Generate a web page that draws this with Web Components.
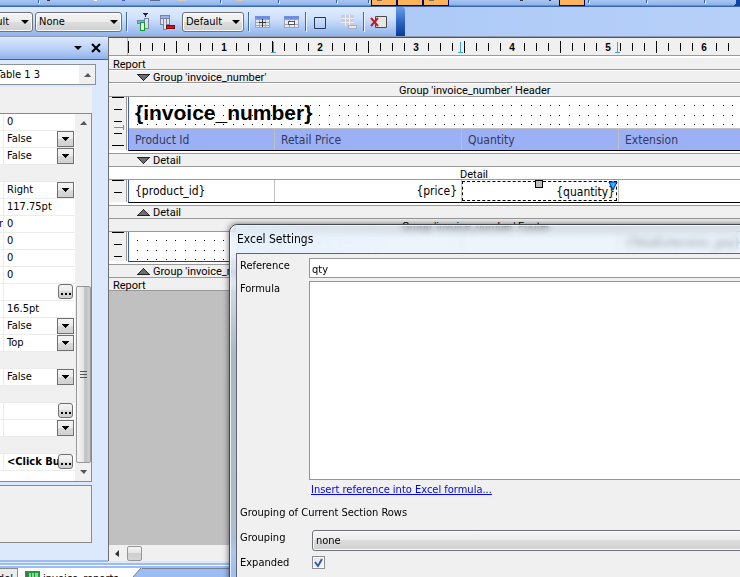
<!DOCTYPE html>
<html lang="en">
<head>
<meta charset="utf-8">
<title>Report Designer</title>
<style>
html, body { height: 100%; }
body { margin: 0; overflow: hidden; font: 11px/13px "DejaVu Sans Condensed", "DejaVu Sans", sans-serif; color: #000; }
</style>
</head>
<body>
<report-app></report-app>

<template id="t-app">
<style>
:host { display: flex; flex-direction: column; height: 100%; background: #dce9fd; }
.work { display: flex; flex: 1; min-height: 0; border-top: 1px solid #8e9aad; }
property-panel { flex: none; width: 108px; }
report-canvas { flex: 1; min-width: 0; }
excel-dialog { position: absolute; left: 229px; top: 224px; right: -8px; bottom: -8px; }
</style>
<top-strip></top-strip>
<main-toolbar></main-toolbar>
<div class="work">
  <property-panel></property-panel>
  <report-canvas></report-canvas>
</div>
<doc-tabs></doc-tabs>
<excel-dialog heading="Excel Settings"></excel-dialog>
</template>

<template id="t-strip">
<style>
:host { display: block; height: 7px; flex: none; background: linear-gradient(#a9c6f2, #8fb3ea 5px, #3b66b0 6px); overflow: hidden; }
svg { display: block; }
</style>
<svg width="740" height="7" shape-rendering="crispEdges" aria-hidden="true">
  <g fill="#3663ad"><path d="M38 0h1v3h-1zM220 0h1v3h-1zM278 0h1v3h-1zM336 0h1v3h-1zM368 0h1v3h-1zM588 0h1v3h-1zM646 0h1v3h-1zM704 0h1v3h-1z"/></g>
  <g fill="#e6f0ff"><path d="M39 1h1v3h-1zM221 1h1v3h-1zM279 1h1v3h-1zM337 1h1v3h-1zM369 1h1v3h-1zM589 1h1v3h-1zM647 1h1v3h-1zM705 1h1v3h-1z"/></g>
  <path d="M47 0h3v1h-3zM520 0h3v1h-3zM549 0h2v1h-2z" fill="#34343c"/>
  <path d="M150 0h10v1h-10z" fill="#5a6b90"/><path d="M177 0h9v1h-9zM236 0h7v1h-7z" fill="#d8ccb8"/>
  <path d="M94 0h3v1h-3z" fill="#fff"/><path d="M122 0h3v1h-3z" fill="#4a55d0"/>
  <path d="M371 0h78v6h-78zM559 0h26v6h-26z" fill="#00007c"/>
  <path d="M372 0h24v5h-24zM398 0h24v5h-24zM424 0h24v5h-24zM560 0h24v5h-24z" fill="#ffb459"/>
  <path d="M377 0h5v1h-5zM429 0h5v1h-5z" fill="#70706c"/>
  <path d="M736 0h4v6h-6l2-3z" fill="#0f46a3"/>
</svg>
</template>

<template id="t-toolbar">
<style>
:host { display: flex; flex: none; height: 29px; background: linear-gradient(90deg, #a4c2f4, #b6d0f9); }
.bar { display: flex; align-items: center; width: 396px; height: 29px; background: linear-gradient(#dfecff, #cfe1fb 40%, #8fb3ec); }
.cap { width: 9px; border-radius: 0 3px 0 0; background: linear-gradient(#6b9dec, #2f66c4 50%, #0a3a94); }
.cut { display: flex; justify-content: flex-end; width: 33px; overflow: hidden; }
.cut combo-box { flex: none; width: 64px; }
.none { width: 87px; margin: 0 4px 0 2px; }
.def { width: 62px; margin: 0 4px 0 5px; }
i { flex: none; width: 1px; height: 19px; background: #3a68b4; box-shadow: 1px 1px 0 #eef5ff; }
button { flex: none; display: block; border: 0; padding: 0; background: none; height: 20px; }
svg { display: block; margin: auto; }
.a { width: 26px; margin-left: 4px; } .b { width: 20px; } .c { width: 28px; } .d { width: 26px; margin-left: 2px } .e { width: 28px; } .f { width: 29px; } .g { width: 30px; }
</style>
<div class="bar">
  <div class="cut"><combo-box label="Style" value="Default"></combo-box></div>
  <combo-box class="none" label="Format" value="None"></combo-box>
  <i></i>
  <button class="a" aria-label="Insert column"><svg width="18" height="18" shape-rendering="crispEdges"><path d="M8 0h5v1h-5zM9 1h3v1h-3zM10 2h1v2h-1z" fill="#222"/><path d="M9 5h4v10h-4z" fill="#d8dde8" stroke="#7b8499"/><path d="M2 7h7v3h-7z" fill="#8fa9ee" stroke="#6a7fc4"/><path d="M5 9h4v8h-4z" fill="#eaf7ea" stroke="#149a28"/></svg></button>
  <button class="b" aria-label="Delete column"><svg width="18" height="18" shape-rendering="crispEdges"><path d="M2 2h9v3h-9z" fill="#9ab1f0" stroke="#6d83c2"/><path d="M2 5h3v6h-3zM5 5h3v11h-3zM8 5h3v6h-3z" fill="#dfe4ee" stroke="#7b8499"/><path d="M8 12h8v3h-8z" fill="#d61212" stroke="#7e0808"/></svg></button>
  <combo-box class="def" label="Layout" value="Default"></combo-box>
  <i></i>
  <button class="c" aria-label="Merge cells"><svg width="16" height="14" shape-rendering="crispEdges"><path d="M0 1h15v12h-15z" fill="#e6eaf2"/><path d="M0 1h15v3h-15z" fill="#6f8fde"/><path d="M0 4h15v1h-15zM0 7h15v1h-15zM0 10h15v1h-15zM0 12h15v1h-15zM0 4h1v9h-1zM4 4h1v9h-1zM10 4h1v9h-1zM14 4h1v9h-1z" fill="#9ea6b6"/><path d="M7 4h1v8h-1zM4 7h7v1h-7z" fill="#333"/></svg></button>
  <button class="d" aria-label="Split cells"><svg width="16" height="14" shape-rendering="crispEdges"><path d="M0 1h15v12h-15z" fill="#e6eaf2"/><path d="M0 1h15v3h-15z" fill="#6f8fde"/><path d="M0 4h15v1h-15zM0 9h15v1h-15zM0 12h15v1h-15zM0 4h1v9h-1zM14 4h1v9h-1zM5 4h1v2h-1zM10 4h1v2h-1zM5 10h1v2h-1zM10 10h1v2h-1z" fill="#9ea6b6"/><path d="M4 6h7v4h-7z" fill="#555"/><path d="M5 7h5v2h-5z" fill="#fff"/></svg></button>
  <i></i>
  <button class="e" aria-label="Border"><svg width="14" height="14"><path d="M1.500 2.500h11v11h-11z" fill="none" stroke="#26365a" stroke-width="1"/></svg></button>
  <button class="f" aria-label="Remove row"><svg width="18" height="16" shape-rendering="crispEdges"><path d="M1 1h13v11h-13z" fill="#c9ced8"/><path d="M1 4h13v1h-13zM1 8h13v1h-13zM5 1h1v11h-1zM9 1h1v11h-1z" fill="#eceef1"/><path d="M8 11h8v3h-8z" fill="#e9ebee" stroke="#a8aeb8"/></svg></button>
  <i></i>
  <button class="g" aria-label="Clear"><svg width="18" height="16"><path d="M5.500 2.500h11v11h-11z" fill="#e6e6e2" stroke="#4a4a4a"/><path d="M1 4l7 8M8 4l-7 8" stroke="#c0202a" stroke-width="2" fill="none"/></svg></button>
</div>
<div class="cap"></div>
</template>

<template id="t-combo">
<style>
:host { display: grid; height: 20px; }
select { grid-area: 1/1; appearance: none; width: 100%; height: 100%; margin: 0; padding: 0 18px 0 3px; font: inherit; color: #000; border: 1px solid #6f7277; border-radius: 3px; background: linear-gradient(#f4f4f4, #ebebeb 50%, #dddddd 50%, #cfcfcf); box-shadow: inset 0 0 0 1px #fbfbfb; }
svg { grid-area: 1/1; place-self: center end; margin-right: 4px; pointer-events: none; }
</style>
<select><option></option></select>
<svg width="8" height="4" aria-hidden="true"><path d="M0 0h8l-4 4z"/></svg>
</template>

<template id="t-panel">
<style>
:host { display: flex; flex-direction: column; background: #dce9fd; padding-bottom: 17px; overflow: hidden; border-bottom: 2px solid #9cbdf2; box-sizing: border-box; }
header { display: flex; align-items: center; justify-content: flex-end; flex: none; height: 22px; gap: 9px; padding-right: 6px; background: linear-gradient(#dbe8fd, #bcd3f7 50%, #8fb2ec); border-bottom: 1px solid #3a66b2; }
header button { display: block; border: 0; background: none; padding: 0; }
header svg { display: block; }
.pick { display: flex; flex: none; width: 95px; height: 19px; margin: 4px 0 2px; border: 1px solid #8c9097; border-left: 0; background: #fff; }
.pick span { width: 40px; line-height: 20px; white-space: nowrap; display: flex; justify-content: flex-end; overflow: hidden; }
.pick button { margin-left: auto; width: 16px; border: 0; padding: 0; background: #f0f0f0; }
.pick svg { display: block; margin: auto; }
.sort { flex: none; width: 92px; height: 26px; background: #f0f0f0; }
.grid { display: flex; flex: none; width: 91px; height: 367px; border: 1px solid #8a8a8a; border-left: 0; background: #fff; margin-bottom: 3px; overflow: hidden; }
.rows { flex: 1; min-width: 0; }
.scroll { display: flex; flex-direction: column; align-items: center; width: 16px; background: #f0f0f0; }
.up { height: 18px; display: flex; align-items: center; }
.track { flex: 1; }
.thumb { box-sizing: border-box; width: 15px; height: 177px; border: 1px solid #979797; border-radius: 2px; background: linear-gradient(90deg, #f6f6f6, #e4e4e4 50%, #bfbfc2 60%, #d0d0d3); display: grid; place-items: center; }
.desc { flex: 1; width: 91px; border: 1px solid #8a8a8a; border-left: 0; background: #f0f0f0; }
</style>
<header>
  <button aria-label="Menu"><svg width="8" height="4"><path d="M0 0h8l-4 4z"/></svg></button>
  <button aria-label="Close"><svg width="11" height="10"><path d="M1 1l8 8M9 1l-8 8" stroke="#000" stroke-width="2" fill="none"/></svg></button>
</header>
<div class="pick"><span>Table 1 3</span><button aria-label="Previous"><svg width="7" height="4"><path d="M0 4h7l-3-4z" fill="#555"/></svg></button></div>
<div class="sort"></div>
<div class="grid">
  <div class="rows"></div>
  <div class="scroll">
    <div class="up"><svg width="7" height="4"><path d="M0 4h7l-3-4z" fill="#555"/></svg></div>
    <div class="track"></div>
    <div class="thumb"><svg width="7" height="8" shape-rendering="crispEdges"><path d="M0 0h7v1h-7zM0 3h7v1h-7zM0 6h7v1h-7z" fill="#555"/></svg></div>
    <div class="up"><svg width="7" height="4"><path d="M0 0h7l-3 4z" fill="#555"/></svg></div>
  </div>
</div>
<div class="desc"></div>
</template>

<template id="t-row">
<style>
:host { display: flex; box-sizing: border-box; height: 17px; border-bottom: 1px solid #ececec; background: #fff; }
:host([category]) { background: #f0f0f0; }
:host([category]) .key { border-color: #f0f0f0; }
.key { flex: none; width: 3px; border-right: 1px solid #ececec; color: #00007c; line-height: 16px; overflow: hidden; display: flex; justify-content: flex-end; }
.val { flex: 1; min-width: 0; padding-left: 3px; line-height: 16px; white-space: nowrap; overflow: hidden; }
:host([strong]) .val { font-weight: bold; }
button { display: grid; place-items: center; flex: none; width: 17px; height: 16px; margin-right: 1px; padding: 0; border: 1px solid #707070; background: linear-gradient(#f4f4f4, #ebebeb 50%, #dadada 50%, #d0d0d0); color: #000; }
button.more { width: 15px; height: 15px; margin-right: 2px; border-radius: 3px; }
</style>
<span class="key"></span><span class="val"><slot></slot></span>
</template>

<template id="t-canvas">
<style>
:host { display: flex; flex-direction: column; border-top: 1px solid #555; border-left: 1px solid #6d6d6d; background: #fff; box-sizing: border-box; margin-bottom: 1px; }
page-ruler { margin-bottom: 2px; }
.g1 { margin-bottom: 1px; }
.void { flex: 1; background: #c0c0c0; }
.hs { display: flex; align-items: center; gap: 8px; height: 16px; padding-left: 6px; background: #f0f0f0; }
.hs b { box-sizing: border-box; width: 15px; height: 15px; border: 1px solid #979797; border-radius: 2px; background: linear-gradient(#f5f5f5, #e3e3e3 50%, #cfcfcf 50%, #d4d4d6); }
table { width: 100%; table-layout: fixed; border-collapse: separate; border-spacing: 0; font-size: 12px; }
th, td { box-sizing: border-box; height: 22px; padding: 0 6px; font-weight: normal; text-align: left; line-height: 14px; border-right: 1px solid #c0c0c0; white-space: nowrap; }
th { background: #9cb0f5; color: #333a55; border-top: 1px solid #c0c0c0; }
tr > :last-child { border-right: 0; }
.num { text-align: right; padding-right: 4px; }
.c1 { width: 146px; } .c2 { width: 187px; } .c3 { width: 157px; }
h1 { margin: 0; padding-left: 6px; font: bold 21px/31px "Liberation Sans", Arial, sans-serif; }
.sel { position: relative; padding: 0 1px 0 0; }
.box { display: block; margin: 1px 0 1px; height: 20px; box-sizing: border-box; line-height: 20px; border: 1px dashed #000; text-align: right; padding-right: 1px; }
.sel svg { position: absolute; }
.h { left: 73px; top: 0; } .t { right: 0; top: 1px; }
</style>
<page-ruler></page-ruler>
<report-band class="g1">Report</report-band>
<report-band class="g1" arrow="down">Group 'invoice_number'</report-band>
<report-band indent="290">Group 'invoice_number' Header</report-band>
<report-section dots size="54">
  <h1>{invoice_number}</h1>
  <table><colgroup><col class="c1"><col class="c2"><col class="c3"><col></colgroup>
    <tr><th>Product Id</th><th>Retail Price</th><th>Quantity</th><th>Extension</th></tr></table>
</report-section>
<report-band arrow="down" lined>Detail</report-band>
<report-band indent="351" plain>Detail</report-band>
<report-section size="23">
  <table><colgroup><col class="c1"><col class="c2"><col class="c3"><col></colgroup>
    <tr><td>{product_id}</td><td class="num">{price}</td>
    <td class="sel"><span class="box">{quantity}</span>
      <svg class="h" width="8" height="8" shape-rendering="crispEdges"><path d="M0 0h8v8h-8z"/><path d="M1 1h6v6h-6z" fill="#bdbdbd"/></svg>
      <svg class="t" width="10" height="10"><path d="M1 1h8l-4 8z" fill="#22bdf5" stroke="#0010d8"/></svg></td>
    <td></td></tr></table>
</report-section>
<report-band arrow="up" lined>Detail</report-band>
<report-band indent="293" tall>Group 'invoice_number' Footer</report-band>
<report-section dots blue size="30">
  <table><colgroup><col class="c1"><col class="c2"><col class="c3"><col></colgroup>
    <tr><td></td><td></td><td></td><td>{TotalExtension_grp}</td></tr></table>
</report-section>
<report-band arrow="up" lined>Group 'invoice_number'</report-band>
<report-band tall>Report</report-band>
<div class="void"></div>
<div class="hs"><svg width="4" height="7"><path d="M4 0v7l-4-3z" fill="#333"/></svg><b></b></div>
</template>

<template id="t-ruler">
<style>
:host { display: flex; height: 17px; border-bottom: 1px solid #999; background: #f0f0f0; overflow: hidden; }
span { flex: none; width: 18px; border-right: 1px solid #b8b8b8; }
svg { flex: 1; display: block; height: 17px; }
text { font: bold 10px "Liberation Sans", Arial, sans-serif; text-anchor: middle; }
</style>
<span></span>
</template>

<template id="t-band">
<style>
:host { display: flex; align-items: center; box-sizing: border-box; flex: none; height: 12px; background: #f0f0f0; border-bottom: 1px solid #999; font: 11px/12px Roboto, "Liberation Sans", sans-serif; white-space: nowrap; padding: 2px 0 0 4px; }
:host([indent]), :host([tall]) { height: 13px; }
:host([plain]) { background: #fff; padding-top: 3px; }
:host([tall]) { padding-top: 3px; }
:host([lined]) { height: 16px; background: linear-gradient(#fff 2px, #999 2px 3px, #f0f0f0 3px); padding-top: 4px; }
:host([arrow]) { padding-left: 28px; }
svg { display: block; margin-right: 3px; }
</style>
<slot></slot>
</template>

<template id="t-section">
<style>
:host { display: flex; flex: none; box-sizing: border-box; background: #fff; }
.v { flex: none; width: 18px; background: #f0f0f0; box-sizing: border-box; border-right: 1px solid #999; margin-right: 1px; margin-bottom: 1px; }
.v svg { display: block; }
.page { flex: 1; min-width: 0; display: grid; border-left: 1px solid #3c5fc0; border-bottom: 1px solid #000; overflow: hidden; }
:host([blue]) .page { border-bottom-color: #2338a8; }
.page > * { grid-area: 1/1; min-width: 0; }
.dots { display: block; width: 100%; height: 100%; }
</style>
<div class="v"></div>
<div class="page"><div><slot></slot></div></div>
</template>

<template id="t-tabs">
<style>
:host { display: flex; flex: none; height: 9px; overflow: hidden; background: #9dbcf2; border-top: 2px solid #9dbcf2; box-shadow: inset 0 1px 0 #fff; padding-top: 3px; margin-top: 1px; }
a { display: flex; box-sizing: border-box; height: 19px; color: #000; text-decoration: none; white-space: nowrap; line-height: 19px; }
.off { width: 18px; justify-content: flex-end; padding-right: 4px; background: #ececec; border: 1px solid #8a8a8a; border-left: 0; overflow: hidden; }
.on { padding: 0 14px 0 7px; background: #fff; border-top: 1px solid #fff; gap: 3px; }
.end { display: block; }
.rest { flex: 1; border-top: 1px solid #75809a; height: 19px; }
</style>
<a class="off" href="#model">Model</a>
<a class="on" href="#invoice"><svg width="15" height="16" shape-rendering="crispEdges"><path d="M0 2h15v14h-15z" fill="#1e9c36"/><path d="M4 4h9v10h-9z" fill="#8fd69a"/><path d="M6 4h1v9h-1zM9 4h1v9h-1zM4 8h9v1h-9z" fill="#1e9c36"/><path d="M1 3h2v12h-2z" fill="#5b6a5e"/></svg><span>invoice_reports</span></a>
<svg class="end" width="9" height="9"><path d="M0 0h8l-8 9z" fill="#fff"/><path d="M0 9l8-9" stroke="#75809a" fill="none"/></svg>
<div class="rest"></div>
</template>

<template id="t-dialog">
<style>
:host { display: flex; flex-direction: column; box-sizing: border-box; border: 1px solid #44494f; border-radius: 8px 0 0 0; padding-left: 6px; background: linear-gradient(rgba(190,203,216,.5), rgba(226,239,252,.6) 14px, rgba(226,239,252,.66) 28px, rgba(214,226,240,.8) 60px, rgba(165,180,196,.8) 130px, rgba(172,186,202,.8) 290px, rgba(160,192,240,.9) 340px); backdrop-filter: blur(3px); box-shadow: inset 1px 1px 0 rgba(255,255,255,.75), 0 0 6px rgba(0,0,0,.6); overflow: hidden; }
h2 { flex: none; margin: 0; padding-left: 1px; font: inherit; font-size: 12px; height: 28px; line-height: 28px; background: linear-gradient(90deg, rgba(226,239,252,.7), rgba(226,239,252,0) 160px); }
.client { flex: 1; display: grid; grid-template-columns: 69px 1fr; grid-template-rows: 20px 199px 19px 22px 21px 18px; row-gap: 3px; align-content: start; padding: 4px 0 0 3px; background: #f0f0f0; border: 1px solid #63676d; border-right: 0; }
label, .head { padding-top: 1px; }
input[type=text], textarea { box-sizing: border-box; width: 100%; height: 100%; margin: 0; border: 1px solid #959595; background: #fff; padding: 2px 2px 0; font: inherit; color: #000; resize: none; border-radius: 0; display: block; }
.link { padding-left: 2px; }
a { color: #00f; }
.head { grid-column: 1 / -1; }
combo-box { margin: 0 -20px 0 3px; height: 21px; }
.chk { display: block; appearance: none; box-sizing: border-box; width: 13px; height: 13px; margin: 2px 0 0 3px; border: 1px solid #8a8d91; background: linear-gradient(135deg, #dfe1e6, #fbfbfb); box-shadow: inset 0 0 0 1px #fff; }
.tick { display: grid; justify-items: start; align-items: start; }
.tick > * { grid-area: 1/1; }
.tick svg { margin: 4px 0 0 5px; pointer-events: none; }
.ex { padding-top: 2px; }
</style>
<h2></h2>
<div class="client">
  <label for="ref">Reference</label><input type="text" id="ref" value="qty">
  <label for="formula">Formula</label><textarea id="formula"></textarea>
  <span></span><div class="link"><a href="#insert">Insert reference into Excel formula...</a></div>
  <div class="head">Grouping of Current Section Rows</div>
  <label>Grouping</label><combo-box label="Grouping" value="none"></combo-box>
  <label class="ex" for="exp">Expanded</label><div class="tick"><input class="chk" type="checkbox" id="exp" checked><svg width="9" height="10"><path d="M1 4l3 4l4-7" fill="none" stroke="#3f5aa0" stroke-width="2"/></svg></div>
</div>
</template>

<script>
const NS = 'http://www.w3.org/2000/svg';
const svg = (markup, w, h, cls = '') => {
  const s = document.createElementNS(NS, 'svg');
  s.setAttribute('width', w);
  s.setAttribute('height', h);
  s.setAttribute('shape-rendering', 'crispEdges');
  if (cls) s.setAttribute('class', cls);
  s.innerHTML = markup;
  return s;
};

/* Base class: clones its template into an open shadow root once. */
class Base extends HTMLElement {
  connectedCallback() {
    if (this.shadowRoot) return;
    const root = this.attachShadow({ mode: 'open' });
    root.append(document.getElementById(this.constructor.tpl).content.cloneNode(true));
    this.setup(root);
  }
  setup() {}
}
const define = (name, tpl, setup) => customElements.define(name, class extends Base {
  static tpl = tpl;
  setup(root) { if (setup) setup.call(this, root); }
});

define('combo-box', 't-combo', function (root) {
  root.querySelector('select').setAttribute('aria-label', this.getAttribute('label'));
  root.querySelector('option').textContent = this.getAttribute('value');
});

define('property-row', 't-row', function (root) {
  root.querySelector('.key').textContent = this.getAttribute('key') || '';
  const kind = this.getAttribute('button');
  if (!kind) return;
  const b = document.createElement('button');
  if (kind === 'drop') {
    b.setAttribute('aria-label', 'Open list');
    b.append(svg('<path d="M0 0h7v1h-7zM1 1h5v1h-5zM2 2h3v1h-3zM3 3h1v1h-1z"/>', 7, 4));
  } else {
    b.className = 'more';
    b.setAttribute('aria-label', 'Edit');
    b.append(svg('<path d="M0 6h2v2h-2zM4 6h2v2h-2zM8 6h2v2h-2z"/>', 10, 9));
  }
  root.append(b);
});

const PROPS = [
  ['0'], ['False', 'drop'], ['False', 'drop'], null, ['Right', 'drop'], ['117.75pt'],
  ['0', '', 'r'], ['0'], ['0'], ['0'], ['', 'more'], ['16.5pt'], ['False', 'drop'], ['Top', 'drop'],
  null, ['False', 'drop'], null, ['', 'more'], ['', 'drop'], null, ['<Click Button>', 'more', '', true]
];
define('property-panel', 't-panel', root => {
  const rows = root.querySelector('.rows');
  for (const p of PROPS) {
    const r = document.createElement('property-row');
    if (!p) r.setAttribute('category', '');
    else {
      r.textContent = p[0];
      if (p[1]) r.setAttribute('button', p[1]);
      if (p[2]) r.setAttribute('key', p[2]);
      if (p[3]) r.setAttribute('strong', '');
    }
    rows.append(r);
  }
});

define('page-ruler', 't-ruler', root => {
  let m = '';
  for (let i = 0; i * 12 < 1920; i++) {
    const x = i * 12;
    if (i % 8 === 0 && i) m += `<text x="${x}" y="13">${i / 8}</text>`;
    else if (i % 4 === 0) m += `<path d="M${x} 3h1v12h-1z"/>`;
    else m += `<path d="M${x} 5h1v8h-1z"/>`;
  }
  for (const x of [145, 332, 489]) m += `<path d="M${x} 4h1v11h-1zM${x - 2} 14h5v1h-5z" fill="#3aa7de"/>`;
  root.append(svg(m, 613, 17));
});

define('report-band', 't-band', function (root) {
  const indent = this.getAttribute('indent');
  if (indent) this.style.paddingLeft = indent + 'px';
  const arrow = this.getAttribute('arrow');
  if (arrow) {
    const half = [0, 1, 2, 3, 4, 5, 6];
    const rows = half.map(i => {
      const y = arrow === 'down' ? i : 6 - i;
      return `<path d="M${i} ${y}h${13 - 2 * i}v1h-${13 - 2 * i}z" fill="#222"/>` +
        (i > 0 && i < 6 ? `<path d="M${i + 1} ${y}h${11 - 2 * i}v1h-${11 - 2 * i}z" fill="#6e6e6e"/>` : '');
    });
    root.insertBefore(svg(rows.join(''), 13, 7), root.querySelector('slot'));
  }
});

define('report-section', 't-section', function (root) {
  const size = +this.getAttribute('size');
  this.style.height = size + 'px';
  let m = '';
  for (let y = 0, i = 0; y < size - 4; y += 12, i++)
    m += i % 4 ? `<path d="M5 ${y}h8v1h-8z"/>` : `<path d="M3 ${y}h12v1h-12z"/>`;
  if (size === 54) m += '<path d="M5 30h10v1h-10zM14 28h1v5h-1z" fill="#3aa7de"/>';
  root.querySelector('.v').append(svg(m, 17, size - 2));
  if (this.hasAttribute('dots')) {
    let d = '';
    for (let a = 0; a < 10; a++) for (let b = 0; b < 10; b++)
      d += `M${Math.round(a * 9.6)} ${Math.round(b * 9.6)}h1v1h-1z`;
    root.querySelector('.page').prepend(svg(
      `<defs><pattern id="p" x="8" y="8" width="96" height="96" patternUnits="userSpaceOnUse"><path d="${d}"/></pattern></defs><rect width="100%" height="100%" fill="url(#p)"/>`,
      '100%', '100%', 'dots'));
  }
});

define('excel-dialog', 't-dialog', function (root) {
  root.querySelector('h2').textContent = this.getAttribute('heading');
});
define('top-strip', 't-strip');
define('main-toolbar', 't-toolbar');
define('doc-tabs', 't-tabs');
define('report-canvas', 't-canvas');
define('report-app', 't-app');
</script>
</body>
</html>
